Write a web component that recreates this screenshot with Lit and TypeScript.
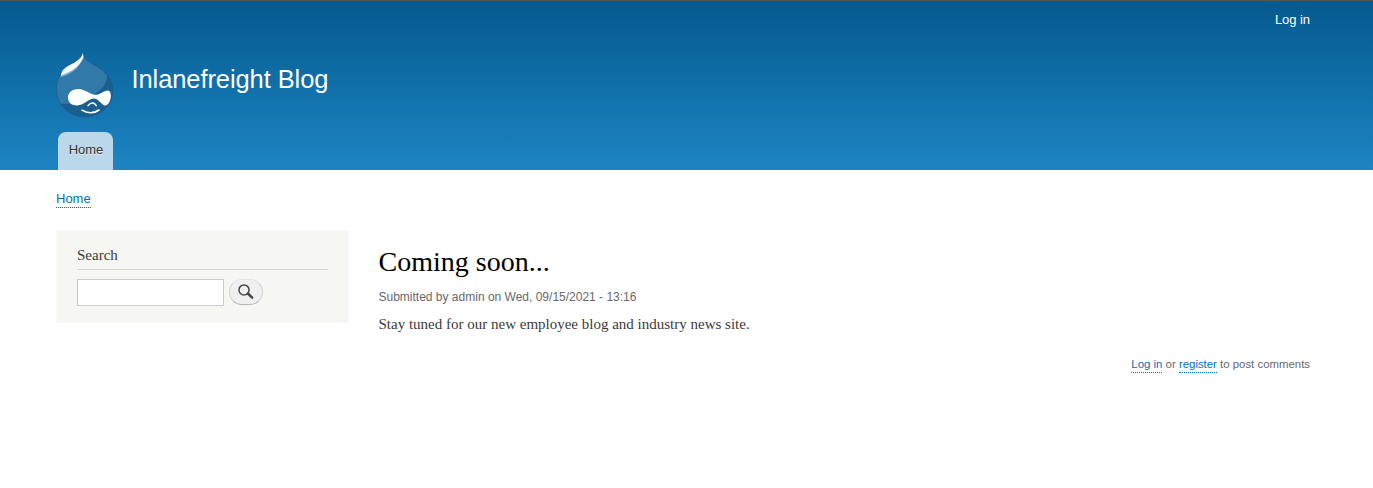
import { LitElement, html, css } from "lit";
import { customElement } from "lit/decorators.js";

@customElement("drop-logo")
class DropLogo extends LitElement {
  static styles = css`
    :host { display: block; width: 58px; height: 65px; }
    svg { display: block; }
  `;
  render() {
    return html`<svg width="58" height="65" viewBox="0 0 58 65">
      <defs><clipPath id="drop"><path d="M26.700 .3C27.500 5.500 32 8.500 38.500 12C49 17.500 56.700 26 56.700 37C56.700 53 44 64 28.700 64S.500 52 .500 36.500C.500 26.500 5 17.500 14 12C20 8.500 26 6 26.700 .3Z"/></clipPath></defs>
      <g clip-path="url(#drop)">
        <rect width="58" height="65" fill="#1b5f90"/>
        <path d="M27 0L40 10C47 13 51 17 51 23C51 33 42 40 33 44C25 47.500 12 53 2 50L0 40V10Z" fill="#3179a8"/>
        <path d="M4.500 24C9 23 16 19.500 20.500 15.500L26 8L20 10L7 17Z" fill="#8fb9d3"/>
      </g>
      <path d="M26.700 .3C27.500 5.500 32 8.500 38.500 12C49 17.500 56.700 26 56.700 37C56.700 53 44 64 28.700 64S.500 52 .500 36.500C.500 26.500 5 17.500 14 12C20 8.500 26 6 26.700 .3Z" fill="none" stroke="#17527c" stroke-opacity=".55" stroke-width=".8"/>
      <path d="M26.500 0C27.300 1.500 27.500 3 27.300 4.700C26.800 6.500 26 7 25 8.700C23 12 21 13.500 19 15C16 17.500 11 20.200 5 22.200C5.500 17.500 9 14.700 12 13C17 10.300 20 9.200 23.300 6C25.300 4.200 26 3 26.500 0Z" fill="#fff"/>
      <path d="M22 36C28 35.500 33 41 38.500 41.700C44 42 48 37.200 52 37.400C55.500 38 55.300 44 54 47.500C53 50.500 51 52.800 48.500 52.500C45 51 42.500 46 38.500 45.500C33 45 29 52 21 52.500C15.500 52.700 12 49 12 44.500C12 39.500 16 36.200 22 36Z" fill="#fff"/>
      <path d="M32 52.600C33.500 50.600 35.500 49.700 37.300 50C38.700 50.400 39.500 51.500 40.300 52.600" fill="none" stroke="#fff" stroke-width="1.500" stroke-linecap="round"/>
      <path d="M26 57.200C31 60.600 38.500 60.500 43 57" fill="none" stroke="#fff" stroke-width="1.600" stroke-linecap="round"/>
    </svg>`;
  }
}

@customElement("app-root")
class AppRoot extends LitElement {
  static styles = css`
    :host { display: block; min-height: 488px; background: #fff; color: #3b3b3b; font-family: "Liberation Serif", serif; }
    * { box-sizing: border-box; }
    a { color: #0071b3; text-decoration: none; border-bottom: 1px dotted #0071b3; }
    h1, h2, p { margin: 0; font-weight: 400; }
    .sans { font-family: "Liberation Sans", sans-serif; }
    header { height: 170px; padding: 0 63px 0 56px; border-top: 1px solid #555; display: flex; flex-direction: column; color: #fffeff;
      background: linear-gradient(#055a8e 0%, #1d84c3 100%); }
    .account { display: flex; justify-content: flex-end; height: 52px; padding-top: 11px; font-size: 13px; letter-spacing: -.05px; line-height: 16px; }
    .brand { display: flex; height: 79px; gap: 17.500px; }
    .name { font-size: 25.500px; letter-spacing: -.09px; line-height: 30px; padding-top: 11px; }
    .tab { width: 55px; height: 38px; margin-left: 2px; padding-left: 1px; border-radius: 8px 8px 0 0; background: #bbd8ea; color: #333; font-size: 13px; line-height: 35px; text-align: center; text-shadow: 0 1px #eee; }
    .crumb { height: 60px; padding: 21px 56px 0; font-size: 13px; line-height: 16px; display: flex; }
    .crumb a { height: 17px; }
    main { display: flex; gap: 29.500px; padding: 0 63px 0 56px; }
    aside { width: 293px; height: 93px; padding: 14px 20px 0; background: #f6f6f2; border: 1px solid #f9f9f9; }
    aside h2 { height: 25px; font-size: 15px; line-height: 20px; border-bottom: 1px solid #d6d6d6; }
    form { display: flex; gap: 5px; margin-top: 9px; }
    input { width: 147px; height: 27px; border: 1px solid #ccc; border-radius: 0; background: #fff; padding: 2px; outline: 0; }
    button { display: grid; place-items: center; width: 34px; height: 26px; padding: 0 1px 1px 0; border: 1px solid #d2d2d2; border-top-color: #e4e4e4; border-bottom-color: #b4b4b4; border-radius: 13px; background: #f0f0f0; }
    article { flex: 1; }
    h1 { color: #000; font-size: 28px; line-height: 34px; padding-top: 15px; }
    .meta { font-size: 12px; line-height: 16px; color: #68696b; margin-top: 10px; }
    .body { font-size: 15px; line-height: 20px; margin-top: 9px; }
    .comments { display: flex; justify-content: flex-end; gap: 3.200px; font-size: 11.400px; line-height: 15px; margin-top: 23px; color: #68696b; }
  `;
  render() {
    return html`
      <header class="sans">
        <div class="account"><span>Log in</span></div>
        <div class="brand"><drop-logo></drop-logo><div class="name">Inlanefreight Blog</div></div>
        <nav class="tab">Home</nav>
      </header>
      <nav class="crumb sans"><a>Home</a></nav>
      <main>
        <aside>
          <h2>Search</h2>
          <form>
            <input type="search" aria-label="Search" />
            <button type="button" aria-label="Search"><svg width="16" height="16" viewBox="0 0 16 16"><circle cx="6" cy="5.900" r="5" fill="none" stroke="#464646" stroke-width="1.500"/><path d="M9.800 9.500L14.200 13.700" stroke="#464646" stroke-width="2.500" stroke-linecap="round"/></svg></button>
          </form>
        </aside>
        <article>
          <h1>Coming soon...</h1>
          <p class="meta sans">Submitted by admin on Wed, 09/15/2021 - 13:16</p>
          <p class="body">Stay tuned for our new employee blog and industry news site.</p>
          <div class="comments sans"><a>Log in</a><span>or</span><a>register</a><span>to post comments</span></div>
        </article>
      </main>`;
  }
}
